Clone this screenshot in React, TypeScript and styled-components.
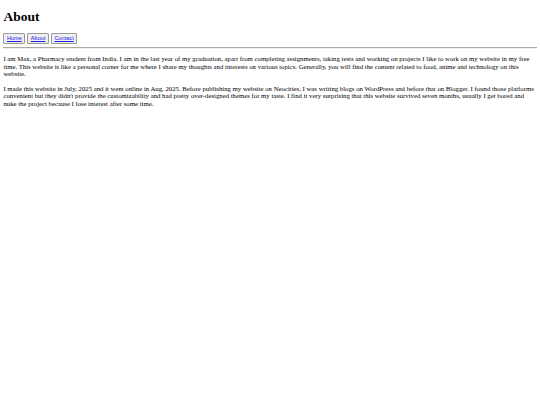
import styled, { createGlobalStyle } from 'styled-components';

const GlobalStyle = createGlobalStyle`
  body {
    margin: 3.4px;
    background: #fff;
    color: #000;
    font-family: "Liberation Serif", "Times New Roman", serif;
  }
`;

const Title = styled.h1`
  font-size: 13.5px;
  font-weight: bold;
  margin: 6px 0 8px;
`;

const Nav = styled.nav`
  display: flex;
  gap: 2px;
  align-items: center;
`;

const NavButton = styled.button`
  font-family: "Liberation Sans", Arial, sans-serif;
  font-size: 5.6px;
  padding: 1px 2.5px;
  background: #efefef;
  border: 1px solid #999;
  border-radius: 1px;
  line-height: 1.2;

  a {
    color: #2222ee;
    text-decoration: underline;
  }
`;

const Rule = styled.hr`
  margin: 2.8px 0;
  border: none;
  border-top: 1px solid #aaa;
  border-bottom: 1px solid #eee;
`;

const Para = styled.p`
  font-size: 6.75px;
  line-height: 7.7px;
  margin: 6px 0 6.5px;
`;

export default function App() {
  return (
    <>
      <GlobalStyle />
      <Title>About</Title>
      <Nav>
        <NavButton><a href="#">Home</a></NavButton>
        <NavButton><a href="#">About</a></NavButton>
        <NavButton><a href="#">Contact</a></NavButton>
      </Nav>
      <Rule />
      <Para>
        I am Max, a Pharmacy student from India. I am in the last year of my graduation, apart from completing assignments, taking tests and working on projects I like to work on my website in my free time. This website is like a personal corner for me where I share my thoughts and interests on various topics. Generally, you will find the content related to food, anime and technology on this website.
      </Para>
      <Para>
        I made this website in July, 2025 and it went online in Aug, 2025. Before publishing my website on Neocities, I was writing blogs on WordPress and before that on Blogger. I found those platforms convenient but they didn't provide the customizability and had pretty over-designed themes for my taste. I find it very surprising that this website survived seven months, usually I get bored and nuke the project because I lose interest after some time.
      </Para>
    </>
  );
}
